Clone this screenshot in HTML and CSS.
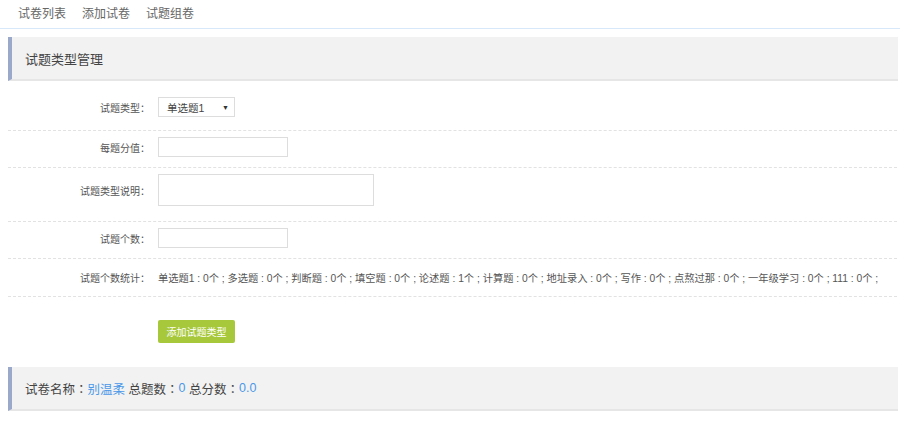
FILE: index.html
```html
<!DOCTYPE html>
<html lang="zh-CN">
<head>
<meta charset="utf-8">
<title>试题类型管理</title>
<link rel="stylesheet" href="styles.css">
</head>
<body>
<nav class="topnav">
  <a class="nav-item">试卷列表</a>
  <a class="nav-item">添加试卷</a>
  <a class="nav-item">试题组卷</a>
</nav>

<div class="panel">试题类型管理</div>

<div class="form">
  <div class="row row-first">
    <label class="lbl">试题类型<span class="c">：</span></label>
    <div class="select"><span>单选题1</span><span class="arrow">▼</span></div>
  </div>
  <div class="row">
    <label class="lbl">每题分值<span class="c">：</span></label>
    <input class="inp" type="text">
  </div>
  <div class="row row-area">
    <label class="lbl">试题类型说明<span class="c">：</span></label>
    <textarea class="area"></textarea>
  </div>
  <div class="row">
    <label class="lbl">试题个数<span class="c">：</span></label>
    <input class="inp" type="text">
  </div>
  <div class="row row-stats">
    <label class="lbl">试题个数统计<span class="c">：</span></label>
    <div class="stats">单选题1 : 0个 ; 多选题 : 0个 ; 判断题 : 0个 ; 填空题 : 0个 ; 论述题 : 1个 ; 计算题 : 0个 ; 地址录入 : 0个 ; 写作 : 0个 ; 点熬过那 : 0个 ; 一年级学习 : 0个 ; 111 : 0个 ;</div>
  </div>
  <div class="actions">
    <button class="btn" type="button">添加试题类型</button>
  </div>
</div>

<div class="panel panel-info">试卷名称<span class="c">：</span><span class="hl">别温柔</span>&nbsp;总题数<span class="c">：</span><span class="hl">0</span>&nbsp;总分数<span class="c">：</span><span class="hl">0.0</span></div>
</body>
</html>
```

FILE: styles.css
```css
* { box-sizing: border-box; }
html, body { margin: 0; padding: 0; background: #fff; }
body {
  font-family: "Liberation Sans", "Noto Sans CJK SC", sans-serif;
  color: #555;
  width: 900px;
}
.c { font-family: "Noto Sans CJK TC", sans-serif; }
.topnav {
  height: 29px;
  border-bottom: 1px solid #d6e8fa;
  padding-left: 10px;
  display: flex;
  align-items: center;
}
.nav-item {
  font-size: 12px;
  color: #666;
  padding: 0 8px;
  line-height: 28px;
}
.panel {
  margin: 8px 2px 0 8px;
  height: 44px;
  background: #f2f2f2;
  border-left: 4px solid #9aa9c9;
  border-bottom: 2px solid #e6e6e6;
  padding-left: 13px;
  display: flex;
  align-items: center;
  font-size: 13px;
  color: #444;
}
.form {
  margin: 9px 3px 0 8px;
}
.row {
  display: flex;
  align-items: center;
  border-bottom: 1px dashed #e2e2e2;
  padding: 6px 0 10px;
}
.row-first { padding: 7px 0 13px; }
.row-area { padding: 6px 0 15px; }
.row-stats { padding: 0; height: 38px; }
.lbl {
  width: 142px;
  flex: none;
  text-align: right;
  font-size: 10px;
  color: #555;
  margin-right: 8px;
}
.select {
  width: 77px;
  height: 20px;
  border: 1px solid #ddd;
  display: flex;
  align-items: center;
  justify-content: space-between;
  padding: 0 5px 0 8px;
  font-size: 10.5px;
  color: #444;
}
.arrow { font-size: 7px; color: #333; }
.inp {
  width: 130px;
  height: 20px;
  border: 1px solid #ddd;
  margin: 0;
  padding: 0;
  outline: none;
  background: #fff;
}
.area {
  width: 216px;
  height: 32px;
  border: 1px solid #ddd;
  margin: 0;
  padding: 0;
  resize: none;
  display: block;
}
.stats {
  font-size: 10.25px;
  color: #555;
  white-space: nowrap;
}
.actions {
  padding: 23px 0 0 150px;
}
.btn {
  display: block;
  width: 77px;
  height: 23px;
  border: none;
  border-radius: 2px;
  background: #a7c83a;
  color: #fff;
  font-family: "Liberation Sans", "Noto Sans CJK SC", sans-serif;
  font-size: 10px;
  padding: 0;
}
.panel-info {
  margin-top: 24px;
  font-size: 12.5px;
}
.hl { color: #4a98e8; }
```
